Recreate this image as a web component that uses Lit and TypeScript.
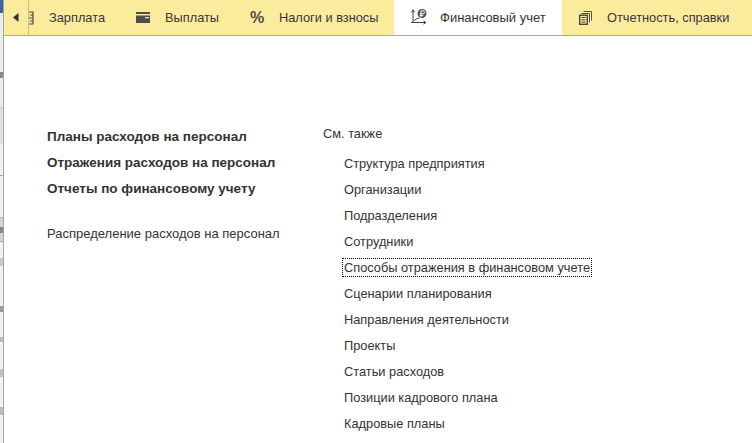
import { LitElement, html, css } from "lit";
import { customElement } from "lit/decorators.js";

const bold = ["Планы расходов на персонал", "Отражения расходов на персонал", "Отчеты по финансовому учету"];
const links = ["Структура предприятия", "Организации", "Подразделения", "Сотрудники", "Способы отражения в финансовом учете", "Сценарии планирования", "Направления деятельности", "Проекты", "Статьи расходов", "Позиции кадрового плана", "Кадровые планы"];
const edge: [number, string][] = [
  [13, "#3f63a8"], [59, "#ececec"], [6, "#8a8a8a"], [29, "#ececec"], [1, "#d0d0d0"], [36, "#e0e0e0"], [31, "#f2f2f2"], [1, "#aaa"],
  [41, "#f2f2f2"], [1, "#bbb"], [9, "#d4d4d4"], [6, "#888"], [8, "#d4d4d4"], [1, "#aaa"], [16, "#f2f2f2"], [8, "#c8c8c8"],
  [40, "#f2f2f2"], [6, "#999"], [25, "#f2f2f2"], [5, "#bbb"], [27, "#f2f2f2"], [8, "#c4c4c4"], [30, "#f2f2f2"], [8, "#bbb"], [40, "#f2f2f2"],
];

@customElement("app-root")
export class AppRoot extends LitElement {
  static styles = css`
    :host { display: flex; width: 752px; height: 443px; overflow: hidden; background: #fff; font-family: "Liberation Sans", Arial, sans-serif; font-size: 12.8px; color: #333; }
    .edge { width: 4px; box-sizing: border-box; flex: none; border-right: 1px solid #a3a89c; display: flex; flex-direction: column; overflow: hidden; }
    .edge div { flex: none; }
    .main { flex: 1; min-width: 0; display: flex; flex-direction: column; }
    .tabs { height: 35px; flex: none; display: flex; background: #fbeb9c; border-bottom: 1px solid #a9a9a9; overflow: hidden; }
    .nav { width: 25px; flex: none; display: flex; align-items: center; box-sizing: border-box; border-right: 1px solid #c9bf85; padding-left: 9px; }
    .tab { display: flex; align-items: center; flex: none; height: 35px; box-sizing: border-box; color: #3b3344; white-space: nowrap; }
    .tab svg { display: block; flex: none; }
    .active { background: #fff; color: #333; }
    .t1 { width: 91px; }
    .t1 svg { margin-right: 15px; }
    .t2 { width: 114px; padding-left: 16px; }
    .t2 svg { margin-right: 15px; }
    .t3 { width: 160px; padding-left: 16px; }
    .pct { font: bold 16px "Liberation Sans", Arial, sans-serif; color: #4d4d4d; width: 29px; flex: none; }
    .t4 { width: 168px; padding-left: 16px; font-size: 13px; }
    .t4 svg { margin-right: 13px; }
    .t5 { flex: 1; padding-left: 17px; }
    .t5 svg { margin-right: 15px; }
    .content { flex: 1; display: flex; padding-top: 92px; }
    .left { width: 319px; padding-left: 43px; box-sizing: border-box; flex: none; }
    .l { height: 26px; line-height: 17px; white-space: nowrap; font-size: 13px; }
    .b { font-weight: bold; font-size: 13.5px; }
    .gap { height: 19px; }
    .head { height: 27px; line-height: 13px; margin-top: -1px; padding-bottom: 1px; box-sizing: content-box; }
    .link { height: 26px; line-height: 17px; padding-left: 21px; white-space: nowrap; }
    .focus { display: inline-block; outline: 1px dotted #000; outline-offset: 0; padding: 0 1px; margin-left: -1px; line-height: 17px; }
  `;
  render() {
    return html`
      <div class="edge">${edge.map(([h, c]) => html`<div style="height:${h}px;background:${c}"></div>`)}</div>
      <div class="main">
        <div class="tabs">
          <div class="nav"><svg width="6" height="9" viewBox="0 0 6 9"><path d="M5.500 0v9L0 4.500z" fill="#333"/></svg></div>
          <div class="tab t1"><svg width="5" height="14" viewBox="0 0 5 14"><path d="M4 0.500v13M0 1h4M1 4h3M0 7h4M1 10h3M0 13h4" fill="none" stroke="#4d4d4d" stroke-width="1.200"/></svg>Зарплата</div>
          <div class="tab t2"><svg width="14" height="11" viewBox="0 0 14 11"><path d="M0 0h14v2H0zM0 3.500h14V11H0zM9 5v1.200h4V5z" fill="#4d4d4d" fill-rule="evenodd"/></svg>Выплаты</div>
          <div class="tab t3"><span class="pct">%</span>Налоги и взносы</div>
          <div class="tab t4 active"><svg width="17" height="17" viewBox="0 0 17 17"><path d="M3 1v13M1 13.500h15M3 .8L1.300 3.500M3 .8l1.700 2.700M16 13.500l-2.500-1.600M16 13.500l-2.500 1.600M3.500 12l3.500-2.500 2.500-.5" fill="none" stroke="#444"/><circle cx="12" cy="4.500" r="4.500" fill="#555"/><path d="M11 8V1.800h2a1.500 1.500 0 010 3h-3.200M9.800 6.400h3.400" fill="none" stroke="#fff"/></svg>Финансовый учет</div>
          <div class="tab t5"><svg width="13" height="14" viewBox="0 0 13 14"><path d="M4.500 .5h8V9.500M2.500 2.500h8V11.500" fill="none" stroke="#555"/><rect x=".7" y="4.200" width="7.600" height="9.100" fill="#fbeb9c" stroke="#444" stroke-width="1.400"/><path d="M2.500 6.500h4M2.500 8.800h4M2.500 11h4" stroke="#444"/></svg>Отчетность, справки</div>
        </div>
        <div class="content">
          <div class="left">
            ${bold.map((t) => html`<div class="l b">${t}</div>`)}
            <div class="gap"></div>
            <div class="l">Распределение расходов на персонал</div>
          </div>
          <div>
            <div class="head">См. также</div>
            ${links.map((t, i) => html`<div class="link">${i === 4 ? html`<span class="focus">${t}</span>` : t}</div>`)}
          </div>
        </div>
      </div>
    `;
  }
}
